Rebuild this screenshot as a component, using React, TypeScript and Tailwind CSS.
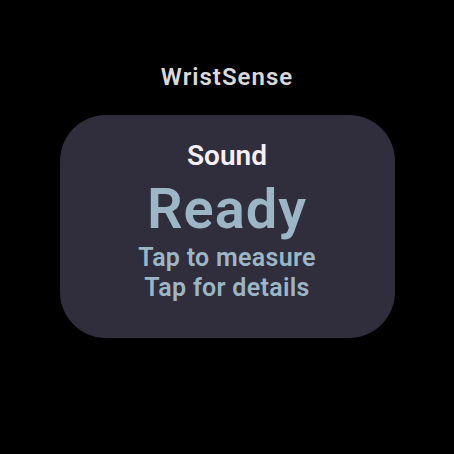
export default function App() {
  return (
    <div className="w-[454px] h-[454px] bg-black flex flex-col items-center font-['Roboto',sans-serif]">
      <div className="pt-[63px] text-[24px] leading-[28px] font-semibold tracking-[1px] text-[#d9d9dc]">
        WristSense
      </div>
      <div className="mt-[24px] w-[335px] h-[223px] rounded-[46px] bg-[#302e3c] flex flex-col items-center pt-[25px]">
        <div className="text-[28px] leading-[32px] font-semibold text-[#f3eef8]">Sound</div>
        <div className="mt-[7px] text-[56px] leading-[60px] font-semibold tracking-[1px] text-[#9db6c6]">
          Ready
        </div>
        <div className="mt-[4px] flex flex-col items-center text-[25px] leading-[30px] font-semibold tracking-[0.3px] text-[#9db6c6]">
          <span>Tap to measure</span>
          <span>Tap for details</span>
        </div>
      </div>
    </div>
  );
}
